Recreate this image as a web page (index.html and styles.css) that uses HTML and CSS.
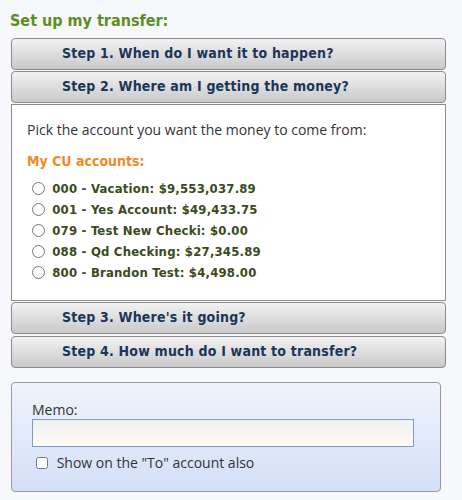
FILE: index.html
```html
<!DOCTYPE html>
<html lang="en">
<head>
  <meta charset="UTF-8">
  <meta name="viewport" content="width=device-width, initial-scale=1.0">
  <title>Transfer</title>
  <link rel="stylesheet" href="styles.css">
</head>
<body>
  <div class="wizard">
    <h2 class="wizard-title">Set up my transfer:</h2>

    <div class="step-head">Step 1. When do I want it to happen?</div>
    <div class="step-head">Step 2. Where am I getting the money?</div>
    <div class="step-body">
      <p class="hint">Pick the account you want the money to come from:</p>
      <h3 class="group-title">My CU accounts:</h3>
      <ul class="accounts">
        <li><label><input type="radio" name="from"> 000 - Vacation: $9,553,037.89</label></li>
        <li><label><input type="radio" name="from"> 001 - Yes Account: $49,433.75</label></li>
        <li><label><input type="radio" name="from"> 079 - Test New Checki: $0.00</label></li>
        <li><label><input type="radio" name="from"> 088 - Qd Checking: $27,345.89</label></li>
        <li><label><input type="radio" name="from"> 800 - Brandon Test: $4,498.00</label></li>
      </ul>
    </div>
    <div class="step-head">Step 3. Where's it going?</div>
    <div class="step-head step-last">Step 4. How much do I want to transfer?</div>

    <div class="memo-box">
      <label class="memo-label" for="memo">Memo:</label>
      <input type="text" id="memo" class="memo-input">
      <label class="memo-check"><input type="checkbox"> Show on the "To" account also</label>
    </div>
  </div>
</body>
</html>
```
FILE: styles.css
```css
body {
  margin: 0;
  background: #f7f8fc;
  font-family: 'Open Sans', 'DejaVu Sans', sans-serif;
  color: #333;
}
.wizard {
  padding: 10px 16px 0 11px;
}
.wizard-title {
  margin: 0 0 7px -1px;
  font-family: 'DejaVu Sans Condensed', 'DejaVu Sans', sans-serif;
  font-size: 16px;
  font-weight: bold;
  color: #5b8f22;
  line-height: 21px;
}
.step-head {
  height: 30px;
  line-height: 29px;
  margin-bottom: 1px;
  padding-left: 50px;
  border: 1px solid #8c8c8c;
  border-radius: 4px;
  background: linear-gradient(to bottom, #f2f2f2, #c9c9c9);
  font-family: 'DejaVu Sans Condensed', 'DejaVu Sans', sans-serif;
  font-size: 14px;
  letter-spacing: 0.2px;
  font-weight: bold;
  color: #19365a;
}
.step-body {
  margin: 0 0 1px;
  padding: 14px 15px 10px;
  background: #fff;
  border: 1px solid #8c8c8c;
  height: 171px;
}
.hint {
  margin: 0;
  font-size: 14px;
  line-height: 22px;
}
.group-title {
  margin: 10px 0 6px;
  font-family: 'DejaVu Sans Condensed', 'DejaVu Sans', sans-serif;
  font-size: 14px;
  font-weight: bold;
  color: #f08a24;
  line-height: 20px;
}
.accounts {
  list-style: none;
  margin: 0;
  padding: 0 0 0 4px;
}
.accounts li {
  height: 21px;
  line-height: 21px;
}
.accounts label {
  font-family: 'DejaVu Sans Condensed', 'DejaVu Sans', sans-serif;
  font-size: 13px;
  letter-spacing: 0.2px;
  font-weight: bold;
  color: #3b4a1c;
}
.accounts input {
  margin: 0 3px 0 1px;
  width: 13px;
  height: 13px;
  vertical-align: -2px;
}
.step-last {
  margin-top: 2px;
  margin-bottom: 14px;
}
.memo-box {
  width: 388px;
  height: 90px;
  padding: 18px 20px 0;
  border: 1px solid #9a9a9a;
  border-radius: 4px;
  background: linear-gradient(to bottom, #eff3fc, #d3e0f8);
}
.memo-label {
  display: block;
  font-size: 14px;
  line-height: 18px;
}
.memo-input {
  display: block;
  width: 382px;
  height: 28px;
  box-sizing: border-box;
  margin: 0 0 4px;
  border: 1px solid #7f9dc4;
  background: linear-gradient(to bottom, #f0f0f0, #fdfcf8);
}
.memo-check {
  font-size: 14px;
  line-height: 20px;
  padding-left: 3px;
}
.memo-check input {
  margin: 0 5px 0 1px;
  width: 12px;
  height: 12px;
  vertical-align: -1px;
}
```
